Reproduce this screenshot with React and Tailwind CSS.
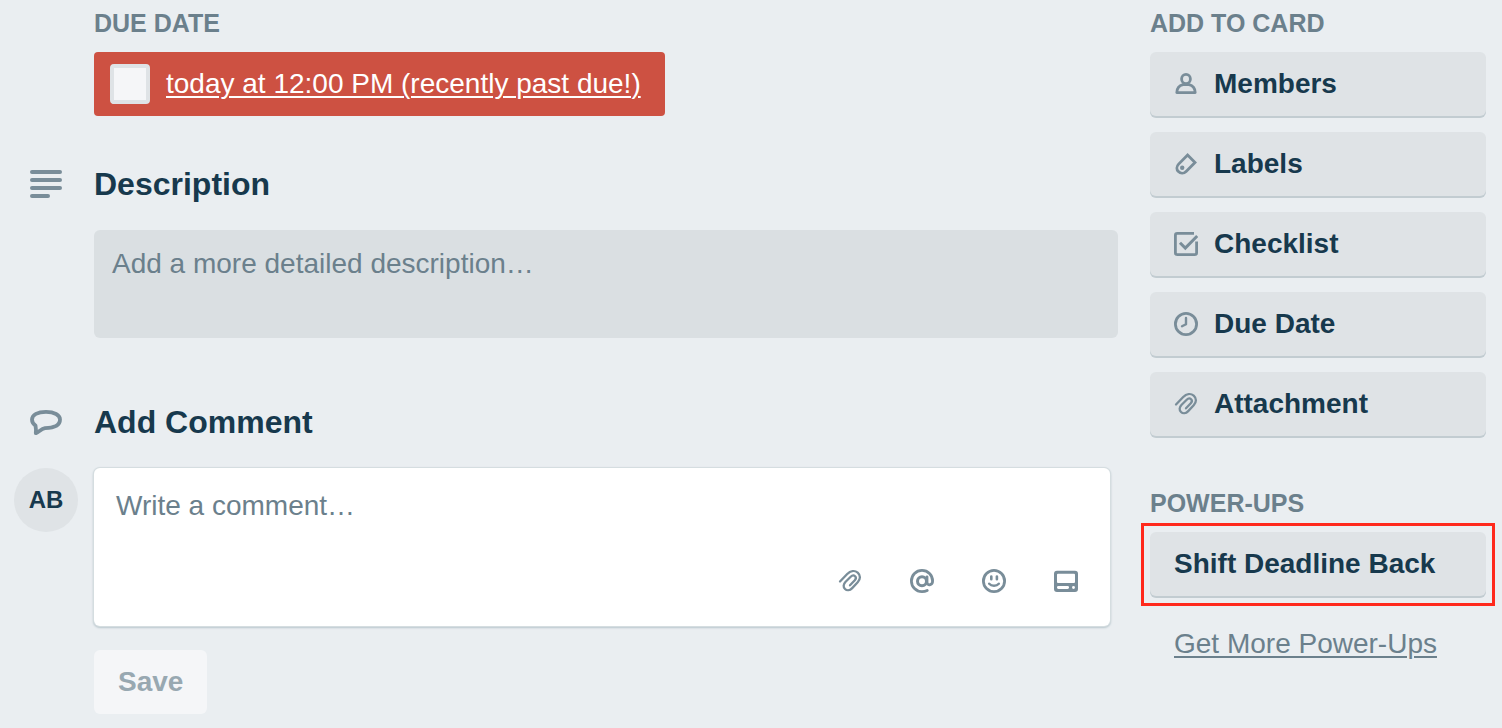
import React from "react";

function Icon({ children, className = "size-6", viewBox = "0 0 24 24" }) {
  return (
    <svg
      viewBox={viewBox}
      className={`${className} shrink-0`}
      fill="none"
      stroke="currentColor"
      strokeWidth="3"
      strokeLinecap="round"
      strokeLinejoin="round"
      aria-hidden="true"
    >
      {children}
    </svg>
  );
}

const MemberIcon = () => (
  <Icon>
    <ellipse cx="12" cy="7" rx="4.400" ry="4.700" strokeWidth="2.800" />
    <path strokeWidth="2.800" d="M9 12.600C5.300 13.500 2.900 16.200 2.800 20.600h18.400c-.1-4.400-2.500-7.100-6.200-8z" />
  </Icon>
);

const LabelIcon = () => (
  <Icon>
    <path strokeLinejoin="miter" strokeWidth="2.800" d="M13.600 3l7.400 7.400-8.900 9c-2.300 2.300-5.600 2.300-7.700.2s-2-5.200.2-7.500z" />
    <circle cx="8.200" cy="15.700" r="2.200" fill="currentColor" stroke="none" />
  </Icon>
);

const ChecklistIcon = () => (
  <Icon>
    <path strokeLinecap="butt" strokeWidth="2.800" d="M20 1.400H3.200c-1 0-1.800.8-1.800 1.800v17.600c0 1 .8 1.800 1.800 1.800h17.600c1 0 1.800-.8 1.800-1.800V9.500" />
    <path strokeLinecap="butt" strokeLinejoin="miter" strokeWidth="3" d="M6 10.800l5.300 5.300L23.200 4" />
  </Icon>
);

const ClockIcon = () => (
  <Icon>
    <circle cx="12" cy="12" r="10.600" strokeWidth="2.800" />
    <path strokeWidth="2.400" d="M12 6v6.300l-4 2" />
  </Icon>
);

const ClipIcon = () => (
  <Icon>
    <path
      strokeWidth="2.300"
      d="M2 12.500L9.200 5C12.500 1.600 16.800 1.200 19.700 3.600C22.700 6.300 22.600 10.200 19.700 13.300L14.200 19.100C11.800 21.600 8.900 21.800 7 20C5 18.100 5.300 15.200 7.400 13L12.700 7.700C14.100 6.300 16 6.200 17.100 7.300C18.300 8.500 18 10 16.800 11.300L12 16.300"
    />
  </Icon>
);

const MentionIcon = () => (
  <Icon>
    <circle cx="12" cy="12.200" r="4.500" />
    <path strokeWidth="2.800" d="M17 7.800v5.400c0 3.800 5.600 3.400 5.600-1.200C22.600 6 17.900 1.400 12 1.400S1.400 6.100 1.400 12 6.100 22.600 12 22.600c1.900 0 3.600-.4 5.200-1.200" />
  </Icon>
);

const EmojiIcon = () => (
  <Icon>
    <circle cx="12" cy="12" r="10.600" strokeWidth="2.800" />
    <path strokeWidth="2.600" d="M9.300 7.600v2.600M14.900 7.600v2.600" />
    <path strokeWidth="2.500" d="M7.200 14.800c2.300 2.700 7.300 2.700 9.600 0" />
  </Icon>
);

const CardIcon = () => (
  <Icon>
    <path
      fill="currentColor"
      stroke="none"
      fillRule="evenodd"
      d="M3 1.800h18a3 3 0 0 1 3 3v15.200a3 3 0 0 1-3 3H3a3 3 0 0 1-3-3V4.800a3 3 0 0 1 3-3zM4 4.800a1 1 0 0 0-1 1v7.300a1 1 0 0 0 1 1h16a1 1 0 0 0 1-1V5.800a1 1 0 0 0-1-1zM4.400 17a1.400 1.400 0 0 0 0 2.900h9.200a1.400 1.400 0 0 0 0-2.900zM19.500 17a1.400 1.400 0 1 0 0 2.900 1.400 1.400 0 0 0 0-2.900z"
    />
  </Icon>
);

const DescriptionIcon = () => (
  <Icon className="h-7 w-8" viewBox="0 0 32 28">
    <path strokeWidth="4" d="M2 2h28M2 10h28M2 18h28M2 26h16" />
  </Icon>
);

const CommentIcon = () => (
  <Icon className="h-7 w-8" viewBox="0 0 32 28">
    <path strokeWidth="3.800" d="M16 3.900C7.800 3.900 2 6.600 2 11.600c0 2.700 1.300 4.500 3.500 6 .5 2.700.6 5 .3 7.600 3.500-1.600 5.400-4.300 9.200-5 9-.2 15-2.200 15-8.600 0-4.800-5.800-7.700-14-7.700z" />
  </Icon>
);

const cardActions = [
  ["Members", MemberIcon],
  ["Labels", LabelIcon],
  ["Checklist", ChecklistIcon],
  ["Due Date", ClockIcon],
  ["Attachment", ClipIcon],
];

const commentTools = [
  ["Add an attachment", ClipIcon],
  ["Mention a member", MentionIcon],
  ["Add emoji", EmojiIcon],
  ["Add a card", CardIcon],
];

function SmallHeading({ children }) {
  return <h3 className="text-[25px] leading-7 font-bold text-[#6b808c] uppercase">{children}</h3>;
}

function SideButton({ icon: Glyph, children }) {
  return (
    <button
      type="button"
      className="flex h-16 w-full items-center gap-4 rounded-md bg-[#dfe3e6] px-6 text-left text-[28px] leading-9 font-bold text-[#17394d] shadow-[0_2px_0_0_#c2ccd1]"
    >
      {Glyph && (
        <span className="text-[#798d99]">
          <Glyph />
        </span>
      )}
      {children}
    </button>
  );
}

function Section({ icon, title, children }) {
  return (
    <section>
      <div className="flex items-center gap-4">
        <div className="flex w-16 shrink-0 justify-center text-[#798d99]">{icon}</div>
        <h2 className="text-[32px] leading-10 font-bold text-[#17394d]">{title}</h2>
      </div>
      {children}
    </section>
  );
}

export default function App() {
  return (
    <div className="flex min-h-screen gap-8 bg-[#eaeef1] pt-[9px] pr-4 pb-3.5 pl-3.5 font-['Liberation_Sans',Arial,sans-serif]">
      <main className="min-w-0 flex-1">
        <section className="ml-20">
          <SmallHeading>Due Date</SmallHeading>
          <div className="mt-[15px] inline-flex h-16 items-center gap-4 rounded bg-[#cd5142] pr-6 pl-4 align-top">
            <input
              type="checkbox"
              aria-label="Mark due date complete"
              className="size-10 shrink-0 appearance-none rounded border-4 border-[#dfe3e6] bg-[#f5f6f8]"
            />
            <a href="#due" className="text-[28px] leading-9 text-white underline decoration-2 underline-offset-3">
              today at 12:00 PM (recently past due!)
            </a>
          </div>
        </section>

        <div className="mt-12">
          <Section icon={<DescriptionIcon />} title="Description">
            <textarea
              aria-label="Description"
              placeholder="Add a more detailed description…"
              className="mt-[26px] ml-20 block h-[108px] w-[calc(100%-80px)] resize-none rounded-md bg-[#dadfe2] px-[18px] py-4 text-[28px] leading-9 text-[#17394d] placeholder:text-[#6b808c]"
            />
          </Section>
        </div>

        <div className="mt-16">
          <Section icon={<CommentIcon />} title="Add Comment">
            <div className="mt-[26px] mr-2 flex items-start gap-4">
              <div className="flex size-16 shrink-0 items-center justify-center rounded-full bg-[#dfe3e6] text-2xl font-bold text-[#17394d]">
                AB
              </div>
              <div className="min-w-0 flex-1 rounded-md bg-white pb-[29px] shadow-[0_0_0_1px_#d5dde0,0_1px_2px_1px_#b9c6cd]">
                <textarea
                  aria-label="Write a comment"
                  placeholder="Write a comment…"
                  className="block h-[97px] w-full resize-none rounded-md px-[22px] pt-5 text-[28px] leading-9 text-[#17394d] outline-none placeholder:text-[#6b808c]"
                />
                <div className="flex justify-end gap-10 pr-7">
                  {commentTools.map(([label, Glyph]) => (
                    <button key={label} type="button" aria-label={label} className="flex size-8 items-center justify-center text-[#798d99]">
                      <Glyph />
                    </button>
                  ))}
                </div>
              </div>
            </div>
            <button type="button" className="mt-6 ml-20 block h-16 rounded-md bg-[#f5f6f8] px-6 text-[28px] leading-9 font-bold text-[#98a8b1]">
              Save
            </button>
          </Section>
        </div>
      </main>

      <aside className="w-[336px] shrink-0">
        <SmallHeading>Add to card</SmallHeading>
        <div className="mt-[15px] flex flex-col gap-4">
          {cardActions.map(([label, Glyph]) => (
            <SideButton key={label} icon={Glyph}>
              {label}
            </SideButton>
          ))}
        </div>

        <div className="mt-[53px]">
          <SmallHeading>Power-Ups</SmallHeading>
          <div className="relative mt-[15px]">
            <SideButton>Shift Deadline Back</SideButton>
            <div className="pointer-events-none absolute -inset-x-[9px] -top-[9px] -bottom-2.5 border-3 border-[#ff291c]" />
          </div>
          <a href="#power-ups" className="mt-[30px] ml-6 block text-[28px] leading-9 text-[#6b808c] underline decoration-2 underline-offset-3">
            Get More Power-Ups
          </a>
        </div>
      </aside>
    </div>
  );
}
